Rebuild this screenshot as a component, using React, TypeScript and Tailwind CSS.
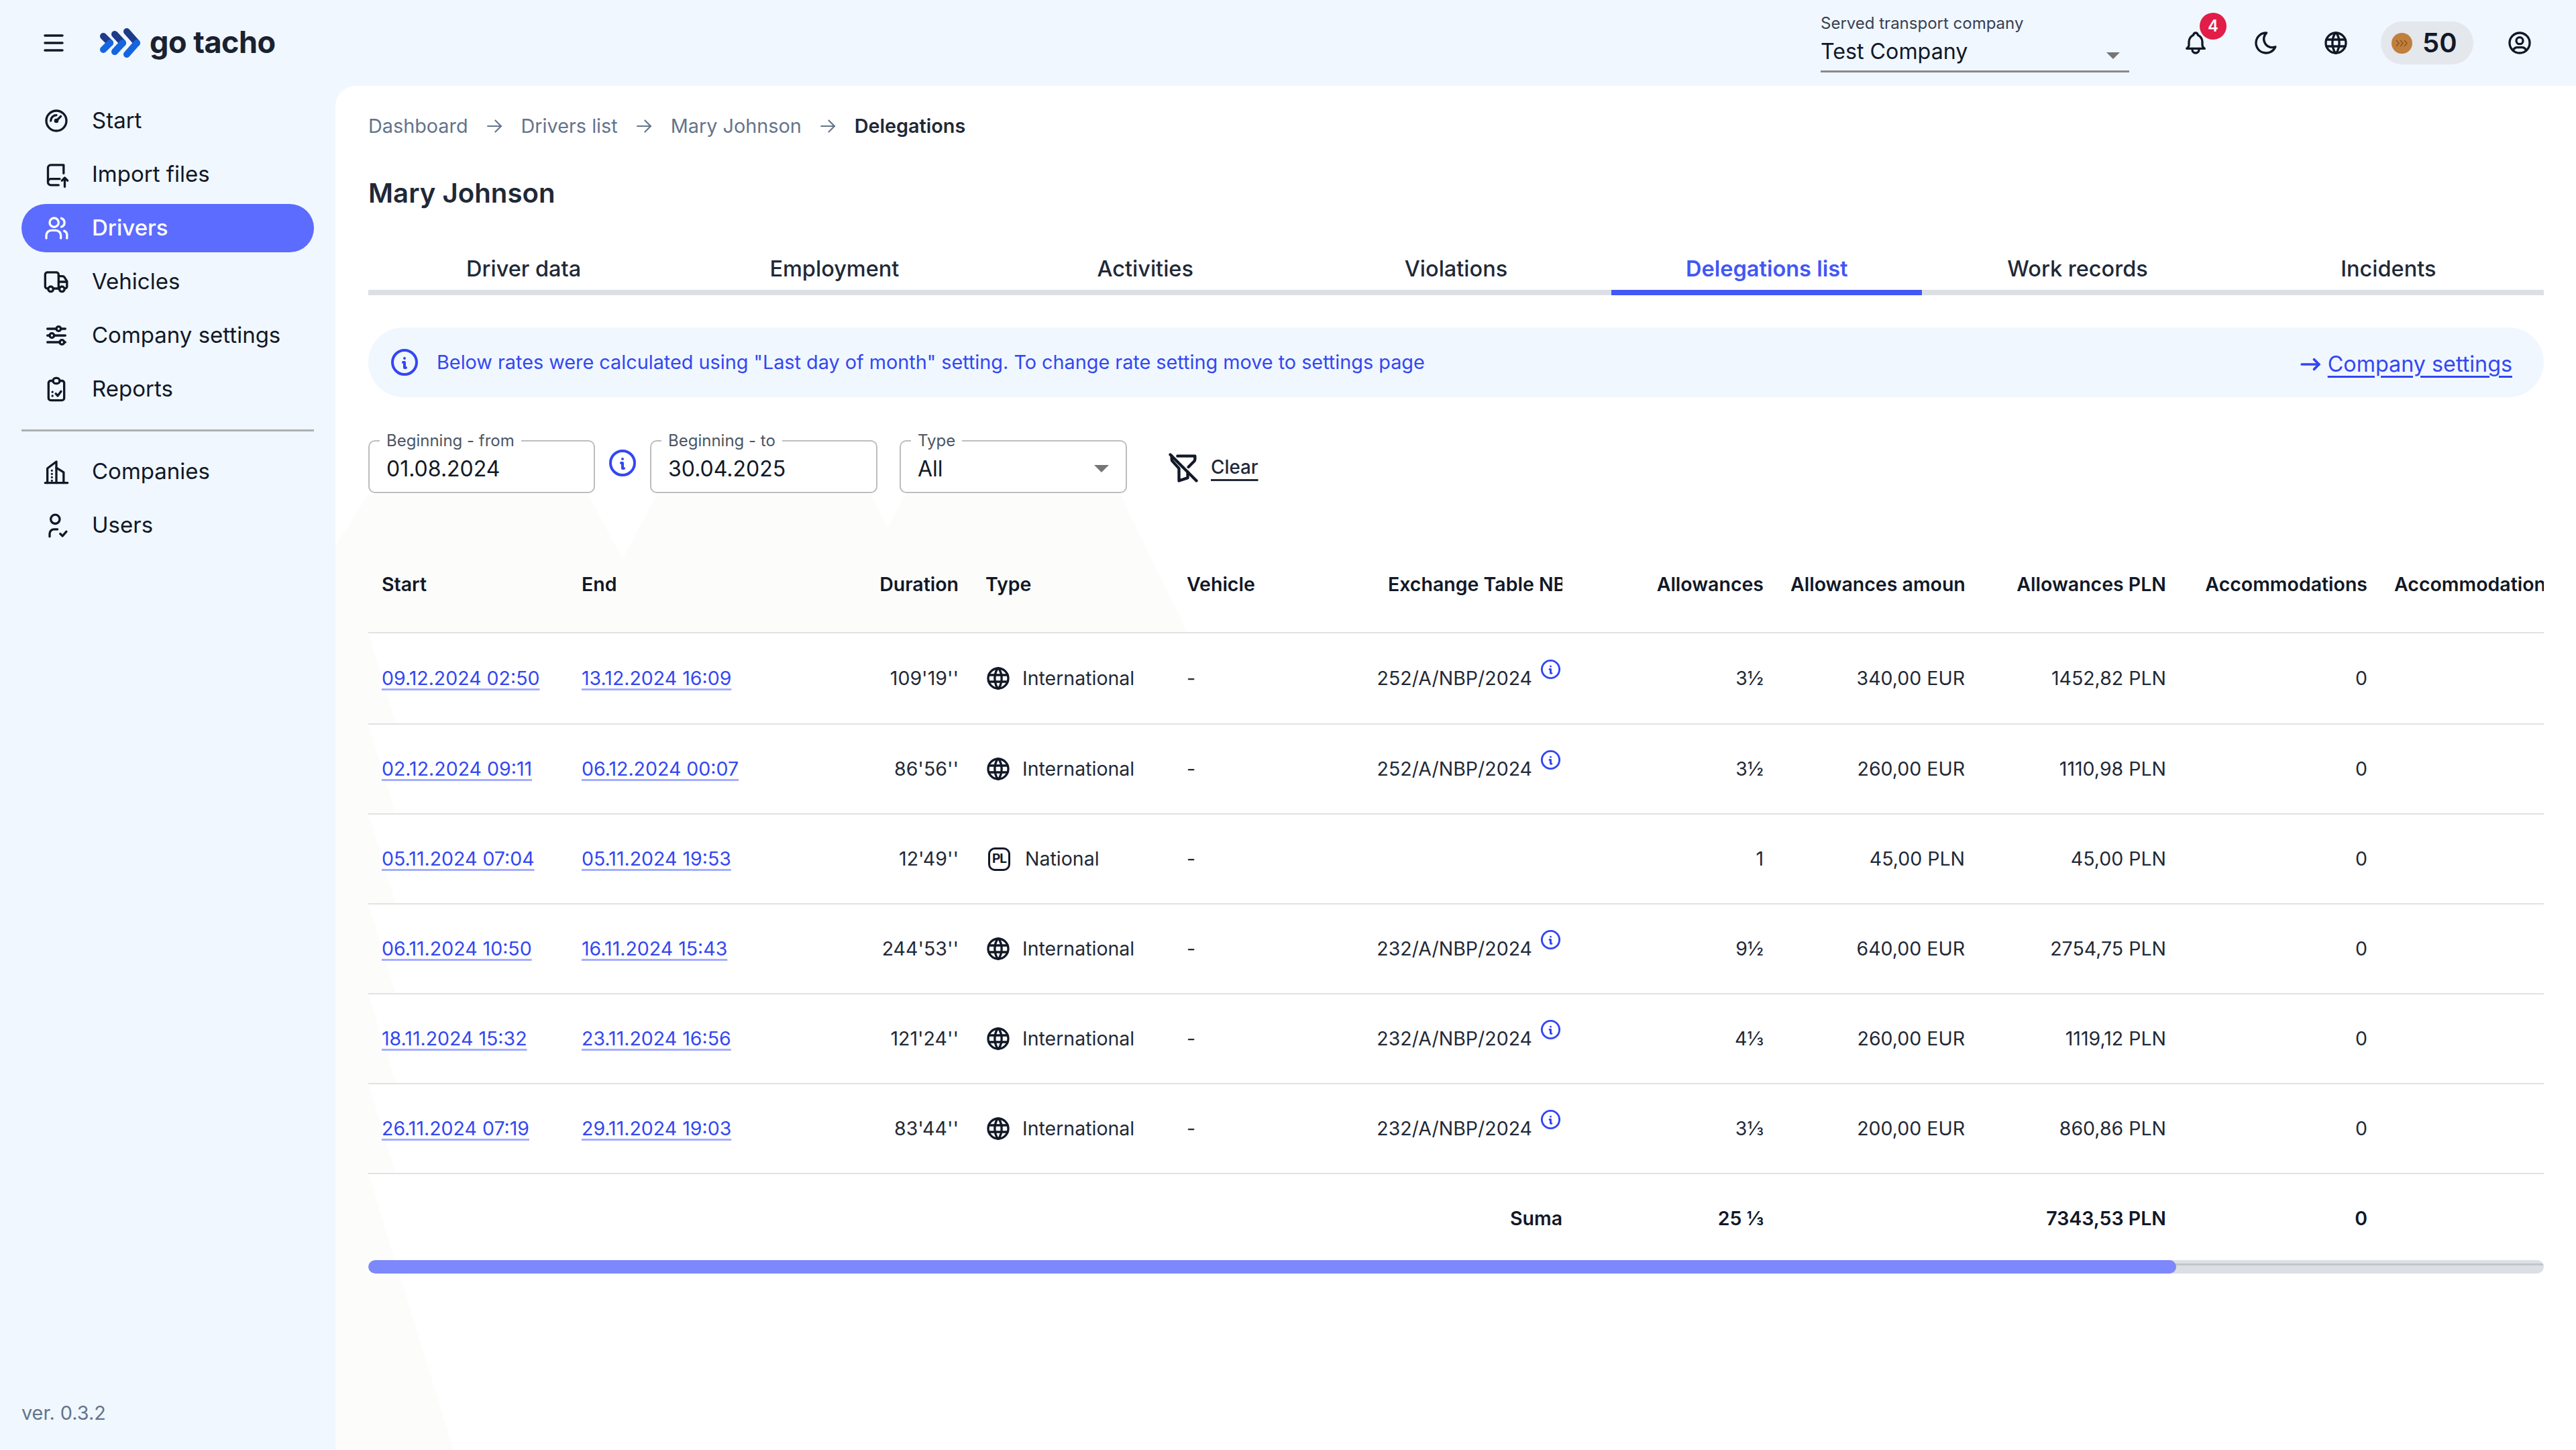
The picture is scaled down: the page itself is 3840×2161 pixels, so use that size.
import { ReactNode } from 'react';
import {
  TbAdjustmentsHorizontal,
  TbArrowNarrowRight,
  TbArrowRight,
  TbBell,
  TbFilterOff,
  TbGauge,
  TbInfoCircle,
  TbMoon,
  TbUserCircle,
  TbWorld,
} from 'react-icons/tb';

const strokeProps = {
  fill: 'none',
  stroke: 'currentColor',
  strokeWidth: 2,
  strokeLinecap: 'round' as const,
  strokeLinejoin: 'round' as const,
};

function ImportIcon() {
  return (
    <svg width="40" height="40" viewBox="0 0 24 24" {...strokeProps}>
      <path d="M18.500 11V3.500H7A2.500 2.500 0 0 0 4.500 6v13A2.500 2.500 0 0 0 7 21.500h7" />
      <path d="M4.500 18.500A2.500 2.500 0 0 1 7 16h8" />
      <path d="M19.500 23v-8M17 17.500l2.500-2.500 2.500 2.500" />
    </svg>
  );
}

function DriversIcon() {
  return (
    <svg width="40" height="40" viewBox="0 0 24 24" {...strokeProps}>
      <circle cx="10" cy="7" r="4" />
      <path d="M16.500 3.200a4 4 0 0 1 0 7.600" />
      <path d="M3 21v-2.500A4.500 4.500 0 0 1 7.500 14h4a4.500 4.500 0 0 1 4.500 4.500V21" />
      <path d="M19 14.500a4 4 0 0 1 2.500 3.700V21" />
    </svg>
  );
}

function VehiclesIcon() {
  return (
    <svg width="40" height="40" viewBox="0 0 24 24" {...strokeProps}>
      <path d="M4.500 18H4a2 2 0 0 1-2-2V5.500a2 2 0 0 1 2-2h8a2 2 0 0 1 2 2V18h-5" />
      <path d="M14 7h3.500a2 2 0 0 1 1.700.9l2.300 3.600V16a2 2 0 0 1-1.500 2M14 12h7.500M14 18h.5" />
      <circle cx="7" cy="18.500" r="2.300" />
      <circle cx="17" cy="18.500" r="2.300" />
    </svg>
  );
}

function ReportsIcon() {
  return (
    <svg width="40" height="40" viewBox="0 0 24 24" {...strokeProps}>
      <path d="M9 4.500H7a2 2 0 0 0-2 2V20a2 2 0 0 0 2 2h10a2 2 0 0 0 2-2V6.500a2 2 0 0 0-2-2h-2" />
      <rect x="9" y="2" width="6" height="5" rx="2.500" />
      <path d="M8.500 14.500h.01M8.500 18h.01M11.500 16l1.700 2 3-4" />
    </svg>
  );
}

function CompaniesIcon() {
  return (
    <svg width="40" height="40" viewBox="0 0 24 24" {...strokeProps}>
      <path d="M2 22h20" />
      <path d="M4 22V9l8-6v19" />
      <path d="M12 8.500l6.500 4V22" />
      <path d="M8 11v.01M8 14v.01M8 17v.01M8 20v.01" />
    </svg>
  );
}

function UsersIcon() {
  return (
    <svg width="40" height="40" viewBox="0 0 24 24" {...strokeProps}>
      <circle cx="11" cy="6.500" r="4" />
      <path d="M6 22v-2.500a4 4 0 0 1 4-4h3" />
      <path d="M15.500 19.500l2 2 3.500-4" />
    </svg>
  );
}

function Logo() {
  return (
    <svg width="60" height="44" viewBox="0 0 60 44" fill="none" strokeWidth="10" strokeLinecap="round" strokeLinejoin="round">
      <path d="M5 12l10 10" stroke="#1e3a8a" />
      <path d="M15 22L5 32" stroke="#1565e0" />
      <path d="M22 9l12 13" stroke="#1e3a8a" />
      <path d="M34 22L22 35" stroke="#1565e0" />
      <path d="M40 5l15 17" stroke="#1e3a8a" />
      <path d="M55 22L40 39" stroke="#1565e0" />
    </svg>
  );
}

function Coin() {
  return (
    <svg width="31" height="31" viewBox="0 0 31 31" fill="none" stroke="#8f5522" strokeWidth="1.500">
      <circle cx="15.500" cy="15.500" r="15.500" fill="#c07f3c" stroke="none" />
      <path d="M7 11l4 4.500-4 4.500M13 11l4 4.500-4 4.500M19 11l4 4.500-4 4.500" />
    </svg>
  );
}

function Caret({ w, h }: { w: number; h: number }) {
  return (
    <svg width={w} height={h} viewBox="0 0 10 5">
      <path d="M0 0h10L5 5z" fill="#757575" />
    </svg>
  );
}

const navTop = [
  { label: 'Start', icon: <TbGauge size={40} /> },
  { label: 'Import files', icon: <ImportIcon /> },
  { label: 'Drivers', icon: <DriversIcon />, active: true },
  { label: 'Vehicles', icon: <VehiclesIcon /> },
  { label: 'Company settings', icon: <TbAdjustmentsHorizontal size={40} /> },
  { label: 'Reports', icon: <ReportsIcon /> },
];

const navBottom = [
  { label: 'Companies', icon: <CompaniesIcon /> },
  { label: 'Users', icon: <UsersIcon /> },
];

const tabs = ['Driver data', 'Employment', 'Activities', 'Violations', 'Delegations list', 'Work records', 'Incidents'];

const rows = [
  { start: '09.12.2024 02:50', end: '13.12.2024 16:09', duration: "109'19''", type: 'International', table: '252/A/NBP/2024', days: '3½', amount: '340,00 EUR', pln: '1452,82 PLN' },
  { start: '02.12.2024 09:11', end: '06.12.2024 00:07', duration: "86'56''", type: 'International', table: '252/A/NBP/2024', days: '3½', amount: '260,00 EUR', pln: '1110,98 PLN' },
  { start: '05.11.2024 07:04', end: '05.11.2024 19:53', duration: "12'49''", type: 'National', table: '', days: '1', amount: '45,00 PLN', pln: '45,00 PLN' },
  { start: '06.11.2024 10:50', end: '16.11.2024 15:43', duration: "244'53''", type: 'International', table: '232/A/NBP/2024', days: '9½', amount: '640,00 EUR', pln: '2754,75 PLN' },
  { start: '18.11.2024 15:32', end: '23.11.2024 16:56', duration: "121'24''", type: 'International', table: '232/A/NBP/2024', days: '4⅓', amount: '260,00 EUR', pln: '1119,12 PLN' },
  { start: '26.11.2024 07:19', end: '29.11.2024 19:03', duration: "83'44''", type: 'International', table: '232/A/NBP/2024', days: '3⅓', amount: '200,00 EUR', pln: '860,86 PLN' },
];

function NavItem({ label, icon, active }: { label: string; icon: ReactNode; active?: boolean }) {
  return (
    <div
      className={
        active
          ? 'flex h-[72px] items-center gap-[33px] rounded-full bg-[#5c6cff] pl-[32px] text-[33px] font-medium text-white'
          : 'flex h-[72px] items-center gap-[33px] rounded-full pl-[32px] text-[33px] text-[#111827]'
      }
    >
      {icon}
      <span>{label}</span>
    </div>
  );
}

function Field({ label, value, width, select }: { label: string; value: string; width: string; select?: boolean }) {
  return (
    <fieldset className={`${width} flex h-[90px] items-center justify-between rounded-[10px] border-[2.500px] border-[#bdbdbd] pr-[25px] pl-[25px]`}>
      <legend className="-ml-[10px] px-[10px] text-[24px] leading-[24px] text-[#4b5563]">{label}</legend>
      <span className="mb-[5px] text-[32px] leading-[52px] text-[#111827]">{value}</span>
      {select && (
        <span className="mb-[5px]">
          <Caret w={22} h={11} />
        </span>
      )}
    </fieldset>
  );
}

function DateLink({ text }: { text: string }) {
  return (
    <span className="text-[#3347f2] underline decoration-[#a5aefb] decoration-[2.500px] underline-offset-[5px]">{text}</span>
  );
}

const th = 'h-[142px] border-b-[2.500px] border-[#e2e2e2] px-[20px] font-semibold text-[#111827]';
const td = 'h-[134px] border-b-[2.500px] border-[#e2e2e2] px-[20px] font-normal text-[#1f2937]';
const sum = 'h-[134px] px-[20px] text-right font-semibold text-[#111827]';

export default function App() {
  return (
    <div className="flex h-screen flex-col overflow-hidden bg-[#f0f7ff] font-[Inter,sans-serif]">
      <header className="flex h-[128px] shrink-0 items-center pr-[64px] pl-[65px]">
        <svg width="30" height="26" viewBox="0 0 30 26" stroke="#111827" strokeWidth="3.500" strokeLinecap="round">
          <path d="M2 2h26M2 13h26M2 24h26" />
        </svg>
        <div className="ml-[54px]">
          <Logo />
        </div>
        <span className="mb-[3px] ml-[14px] text-[45px] leading-none font-bold tracking-[-0.5px] text-[#1a2230]">go tacho</span>

        <div className="ml-auto w-[460px]">
          <div className="text-[24px] leading-[30px] text-[#374151]">Served transport company</div>
          <div className="mt-[6px] flex h-[52px] items-center justify-between border-b-[3px] border-[#8a8a8a] pr-[14px] pb-[7px]">
            <span className="text-[32.200px] text-[#111827]">Test Company</span>
            <span className="mt-[12px]">
              <Caret w={20} h={10} />
            </span>
          </div>
        </div>
        <div className="relative ml-[79px] text-[#111827]">
          <TbBell size={40} />
          <span className="absolute top-[-25px] left-[26px] flex h-[40px] w-[40px] items-center justify-center rounded-full bg-[#e11d48] text-[24px] font-semibold text-white">
            4
          </span>
        </div>
        <TbMoon size={40} className="ml-[65px] text-[#111827]" />
        <TbWorld size={40} className="ml-[64px] text-[#111827]" />
        <div className="ml-[47px] flex h-[64px] w-[138px] items-center gap-[15px] rounded-full bg-[#e4e7ec] pl-[16px]">
          <Coin />
          <span className="text-[40px] leading-none font-semibold text-[#111827]">50</span>
        </div>
        <TbUserCircle size={40} className="ml-[49px] text-[#111827]" />
      </header>

      <div className="flex min-h-0 flex-1">
        <aside className="flex w-[500px] shrink-0 flex-col px-[32px] pt-[16px] pb-[35px]">
          <nav className="flex flex-col gap-[8px]">
            {navTop.map((item) => (
              <NavItem key={item.label} {...item} />
            ))}
          </nav>
          <div className="mt-[24px] mb-[24px] h-[2.500px] bg-[#aeb0b3]" />
          <nav className="flex flex-col gap-[8px]">
            {navBottom.map((item) => (
              <NavItem key={item.label} {...item} />
            ))}
          </nav>
          <div className="mt-auto text-[28.800px] leading-[40px] text-[#64748b]">ver. 0.3.2</div>
        </aside>

        <main className="relative flex-1 overflow-hidden rounded-tl-[30px] bg-white pr-[48px] pl-[49px]">
          {/* faint mountains behind the content */}
          <svg className="absolute top-0 left-0" width="3340" height="2033" viewBox="500 128 3340 2033" fill="#fcfcfa">
            <path d="M549 737H877L928 833 979 737H1298L1323 787 1349 737H1670L1770 943H500V813z" />
            <path d="M500 943H549L590 1079 549 1079 590 1213 549 1213 590 1347 549 1347 590 1481 549 1481 590 1615 549 1615 590 1749 549 1749 676 2161H500z" />
          </svg>

          <div className="relative">
            <div className="mt-[40px] flex h-[40px] items-center gap-[22.500px] text-[28.800px] text-[#64748b]">
              <span>Dashboard</span>
              <TbArrowRight size={34} strokeWidth={1.500} />
              <span>Drivers list</span>
              <TbArrowRight size={34} strokeWidth={1.500} />
              <span>Mary Johnson</span>
              <TbArrowRight size={34} strokeWidth={1.500} />
              <span className="font-semibold text-[#1f2937]">Delegations</span>
            </div>

            <h1 className="mt-[55px] text-[40.200px] leading-[50px] font-semibold text-[#1f2937]">Mary Johnson</h1>

            <div className="mt-[47px] grid grid-cols-7">
              {tabs.map((tab) =>
                tab === 'Delegations list' ? (
                  <div key={tab} className="flex h-[80px] items-center justify-center border-b-[8px] border-[#4257f5] pt-[10px] text-[32.500px] font-semibold text-[#4257f5]">
                    {tab}
                  </div>
                ) : (
                  <div key={tab} className="flex h-[80px] items-center justify-center border-b-[8px] border-[#dcdfe4] pt-[10px] text-[32.500px] font-medium text-[#1f2937]">
                    {tab}
                  </div>
                ),
              )}
            </div>

            <div className="mt-[48px] flex h-[104px] items-center rounded-[52px] bg-[#f0f7ff] pr-[47px] pl-[30px] text-[#3347f2]">
              <TbInfoCircle size={48} />
              <span className="ml-[24px] text-[28.800px]">
                Below rates were calculated using "Last day of month" setting. To change rate setting move to settings page
              </span>
              <span className="mt-[6px] ml-auto flex items-center gap-[4px] text-[32.300px]">
                <TbArrowNarrowRight size={44} />
                <span className="underline decoration-[2.500px] underline-offset-[6px]">Company settings</span>
              </span>
            </div>

            <div className="mt-[53px] flex items-center">
              <Field label="Beginning - from" value="01.08.2024" width="w-[338px]" />
              <TbInfoCircle size={48} className="mx-[17px] text-[#3347f2]" />
              <Field label="Beginning - to" value="30.04.2025" width="w-[339px]" />
              <div className="ml-[33px]">
                <Field label="Type" value="All" width="w-[339px]" select />
              </div>
              <div className="mt-[13px] ml-[58px] flex items-center gap-[15px]">
                <TbFilterOff size={52} className="text-[#111827]" />
                <span className="text-[27.800px] font-medium text-[#1f2937] underline decoration-[2.500px] underline-offset-[8px]">Clear</span>
              </div>
            </div>

            <div className="mt-[66px] h-[1077px] overflow-hidden">
              <table className="w-[3600px] table-fixed border-collapse text-[28.500px]">
                <colgroup>
                  <col className="w-[298px]" />
                  <col className="w-[302px]" />
                  {Array.from({ length: 10 }).map((_, i) => (
                    <col key={i} className="w-[300px]" />
                  ))}
                </colgroup>
                <thead>
                  <tr>
                    <th className={`${th} text-left`}>Start</th>
                    <th className={`${th} text-left`}>End</th>
                    <th className={`${th} text-right`}>Duration</th>
                    <th className={`${th} text-left`}>Type</th>
                    <th className={`${th} text-left`}>Vehicle</th>
                    <th className={`${th} text-left`}>
                      <div className="overflow-hidden whitespace-nowrap">Exchange Table NBP</div>
                    </th>
                    <th className={`${th} text-right`}>Allowances</th>
                    <th className={`${th} text-right`}>
                      <div className="overflow-hidden whitespace-nowrap">Allowances amount</div>
                    </th>
                    <th className={`${th} text-right`}>Allowances PLN</th>
                    <th className={`${th} text-right`}>Accommodations</th>
                    <th className={`${th} text-left`}>
                      <div className="overflow-hidden whitespace-nowrap">Accommodations amount</div>
                    </th>
                    <th className={th} />
                  </tr>
                </thead>
                <tbody className="[&>tr:first-child>td]:h-[136px]">
                  {rows.map((row) => (
                    <tr key={row.start}>
                      <td className={td}>
                        <DateLink text={row.start} />
                      </td>
                      <td className={td}>
                        <DateLink text={row.end} />
                      </td>
                      <td className={`${td} text-right`}>{row.duration}</td>
                      <td className={td}>
                        {row.type === 'National' ? (
                          <div className="flex items-center">
                            <span className="ml-[4px] flex h-[35px] w-[33px] items-center justify-center rounded-[10px] border-[3.500px] border-[#111827] text-[19px] font-bold tracking-[-1px] text-[#111827]">
                              PL
                            </span>
                            <span className="ml-[22px]">National</span>
                          </div>
                        ) : (
                          <div className="flex items-center">
                            <TbWorld size={40} className="-ml-[1px] text-[#111827]" />
                            <span className="ml-[16px]">International</span>
                          </div>
                        )}
                      </td>
                      <td className={td}>-</td>
                      <td className={td}>
                        {row.table && (
                          <div className="flex items-center justify-end gap-[10px] whitespace-nowrap">
                            <span>{row.table}</span>
                            <TbInfoCircle size={35} className="mb-[28px] shrink-0 text-[#3347f2]" />
                          </div>
                        )}
                      </td>
                      <td className={`${td} text-right`}>{row.days}</td>
                      <td className={`${td} text-right`}>{row.amount}</td>
                      <td className={`${td} text-right`}>{row.pln}</td>
                      <td className={`${td} text-right`}>0</td>
                      <td className={td} />
                      <td className={td} />
                    </tr>
                  ))}
                  <tr>
                    <td className={sum} />
                    <td className={sum} />
                    <td className={sum} />
                    <td className={sum} />
                    <td className={sum} />
                    <td className={sum}>Suma</td>
                    <td className={sum}>25 ⅓</td>
                    <td className={sum} />
                    <td className={sum}>7343,53 PLN</td>
                    <td className={sum}>0</td>
                    <td className={sum} />
                    <td className={sum} />
                  </tr>
                </tbody>
              </table>
            </div>

            <div className="relative h-[20px] overflow-hidden rounded-full bg-[#dcdfe4]">
              <div className="absolute top-[5px] right-0 left-0 h-[2.500px] bg-[#c2c5ca]" />
              <div className="relative h-full w-[2695px] rounded-full bg-[#7c88fb]" />
            </div>
          </div>
        </main>
      </div>
    </div>
  );
}
